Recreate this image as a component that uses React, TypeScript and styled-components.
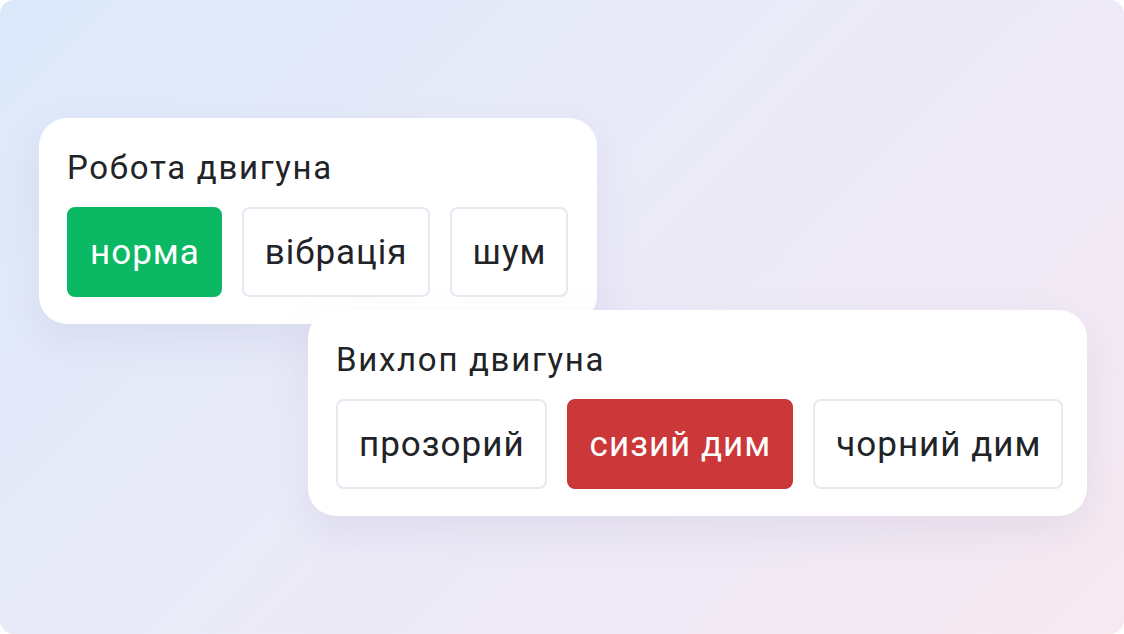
import React from 'react';
import styled, { createGlobalStyle } from 'styled-components';

const GlobalStyle = createGlobalStyle`
  html, body {
    margin: 0;
    padding: 0;
    background: #ffffff;
  }
  body {
    font-family: Roboto, 'Noto Sans', 'Liberation Sans', sans-serif;
    color: #222326;
  }
`;

type Option = { label: string; tone?: 'ok' | 'bad' };

const groups: { title: string; options: Option[] }[] = [
  {
    title: 'Робота двигуна',
    options: [{ label: 'норма', tone: 'ok' }, { label: 'вібрація' }, { label: 'шум' }],
  },
  {
    title: 'Вихлоп двигуна',
    options: [{ label: 'прозорий' }, { label: 'сизий дим', tone: 'bad' }, { label: 'чорний дим' }],
  },
];

const App = () => {
  return (
    <>
      <GlobalStyle />
      <Stage>
        {groups.map((g, i) => (
          <Card key={g.title} $second={i === 1}>
            <Title>{g.title}</Title>
            <Options>
              {g.options.map((o) => (
                <Chip key={o.label} $tone={o.tone}>
                  {o.label}
                </Chip>
              ))}
            </Options>
          </Card>
        ))}
      </Stage>
    </>
  );
};

const Stage = styled.div`
  box-sizing: border-box;
  width: 1124px;
  height: 634px;
  border-radius: 14px;
  overflow: hidden;
  padding: 118px 0 0 39px;
  display: flex;
  flex-direction: column;
  align-items: flex-start;
  background: linear-gradient(135deg, #dce9fb 0%, #eaeaf8 45%, #f0e9f5 75%, #f7e9f0 100%);
`;

const Card = styled.div<{ $second?: boolean }>`
  position: relative;
  box-sizing: border-box;
  background: #ffffff;
  border-radius: 28px;
  padding: 28px 28px 27px 28px;
  display: flex;
  flex-direction: column;
  gap: 17px;
  box-shadow: 0 16px 40px rgba(120, 120, 170, 0.12);
  margin-top: ${({ $second }) => ($second ? '-14px' : '0')};
  margin-left: ${({ $second }) => ($second ? '269px' : '0')};
  padding-right: ${({ $second }) => ($second ? '24px' : '29px')};
  z-index: ${({ $second }) => ($second ? 2 : 1)};
`;

const Title = styled.div`
  font-size: 33px;
  line-height: 44px;
  letter-spacing: 1.7px;
  font-weight: 400;
  color: #222326;
`;

const Options = styled.div`
  display: flex;
  gap: 20px;
`;

const Chip = styled.div<{ $tone?: 'ok' | 'bad' }>`
  box-sizing: border-box;
  height: 90px;
  padding: 0 20px 0 21px;
  display: flex;
  align-items: center;
  justify-content: center;
  border-radius: 8px;
  font-size: 35px;
  letter-spacing: 1px;
  color: ${({ $tone }) => ($tone ? '#ffffff' : '#222326')};
  background: ${({ $tone }) => ($tone === 'ok' ? '#0bb863' : $tone === 'bad' ? '#cc3739' : '#ffffff')};
  border: 2px solid
    ${({ $tone }) => ($tone === 'ok' ? '#0bb863' : $tone === 'bad' ? '#cc3739' : '#e9e7f1')};
`;

export default App;
